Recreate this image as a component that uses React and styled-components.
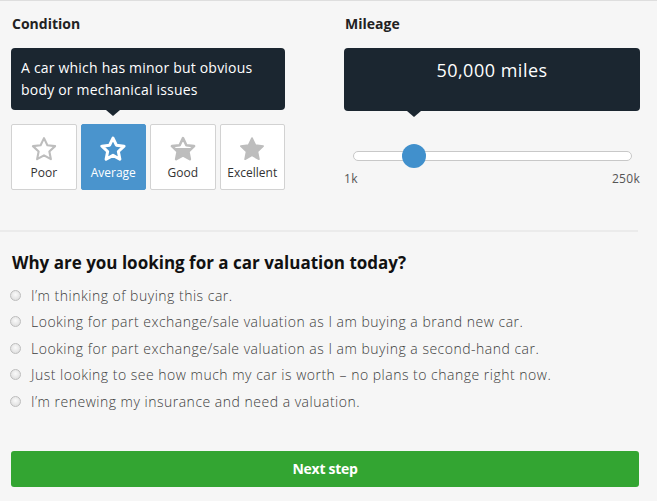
import React from 'react'
import styled, { createGlobalStyle } from 'styled-components'

const GlobalStyle = createGlobalStyle`
  html, body { margin: 0; padding: 0; background: #f6f6f6; }
  body { font-family: "Open Sans", "Noto Sans", Arial, sans-serif; color: #222; }
`

const Page = styled.div`
  width: 657px;
  height: 501px;
  box-sizing: border-box;
  border-top: 1px solid #dedede;
  background: #f6f6f6;
`

const Top = styled.div`
  display: grid;
  grid-template-columns: 274px 296px;
  column-gap: 59px;
  padding: 14px 0 0 11px;
`

const Label = styled.div`
  font-size: 14px;
  font-weight: 700;
  line-height: 18px;
  padding-left: 1px;
  margin-bottom: 15px;
`

const Tip = styled.div`
  position: relative;
  background: #1b2630;
  color: #fff;
  border-radius: 4px;
  box-sizing: border-box;
  height: ${p => p.$h}px;
  padding: ${p => p.$center ? '10px 0 0' : '9px 10px 0'};
  font-size: ${p => p.$center ? '18px' : '14px'};
  line-height: ${p => p.$center ? '24px' : '22px'};
  letter-spacing: ${p => p.$center ? '0.5px' : '0.2px'};
  text-align: ${p => p.$center ? 'center' : 'left'};
  &::after {
    content: '';
    position: absolute;
    left: ${p => p.$arrow}px;
    bottom: -6px;
    border-left: 7px solid transparent;
    border-right: 7px solid transparent;
    border-top: 6px solid #1b2630;
  }
`

const Options = styled.div`
  display: flex;
  gap: 4px;
  margin-top: 14px;
`

const Option = styled.div`
  width: 64px;
  height: 64px;
  border: 1px solid ${p => p.$active ? '#4a94cd' : '#d2d2d2'};
  border-radius: 2px;
  background: ${p => p.$active ? '#4a94cd' : '#fff'};
  color: ${p => p.$active ? '#fff' : '#333'};
  display: flex;
  flex-direction: column;
  align-items: center;
  font-size: 12px;
  line-height: 16px;
  svg { margin-top: 10px; margin-bottom: 4px; }
`

const Slider = styled.div`
  position: relative;
  margin: 40px 8px 0 9px;
  height: 10px;
  box-sizing: border-box;
  border: 1px solid #c8c8c8;
  border-radius: 6px;
  background: #fff;
`

const Thumb = styled.div`
  position: absolute;
  top: -8px;
  width: 24px;
  height: 24px;
  margin-left: -12px;
  border-radius: 50%;
  background: #4190cc;
`

const Scale = styled.div`
  display: flex;
  justify-content: space-between;
  margin-top: 10px;
  font-size: 12px;
  color: #555;
  line-height: 16px;
  letter-spacing: 0.3px;
`

const Divider = styled.div`
  width: 638px;
  height: 2px;
  background: #ebebeb;
  margin-top: 40px;
`

const Question = styled.h2`
  margin: 20px 0 8px 12px;
  font-size: 17px;
  font-weight: 700;
  line-height: 22px;
  color: #111;
`

const Choices = styled.div`
  display: flex;
  flex-direction: column;
  padding-left: 10px;
`

const Choice = styled.label`
  display: flex;
  align-items: center;
  height: 26.5px;
  font-size: 14px;
  font-weight: 300;
  color: #3d3d3d;
  letter-spacing: 0.5px;
`

const Radio = styled.span`
  width: 9px;
  height: 9px;
  border-radius: 50%;
  border: 1px solid #bdbdbd;
  background: radial-gradient(circle at 50% 40%, #fafafa, #d8d8d8);
  margin-right: 10px;
`

const Next = styled.button`
  display: block;
  margin: 36px 0 0 11px;
  width: 628px;
  height: 36px;
  border: none;
  border-radius: 3px;
  background: #33a532;
  color: #fff;
  font-family: "Open Sans", "Noto Sans", Arial, sans-serif;
  font-size: 14px;
  font-weight: 700;
  letter-spacing: -0.3px;
`

const STAR = 'M12 2.5l2.9 6.1 6.6.8-4.9 4.6 1.3 6.6L12 17.3l-5.9 3.3 1.3-6.6L2.5 9.4l6.6-.8z'

function Star({ kind }) {
  if (kind === 'full') {
    return (
      <svg width="28" height="26" viewBox="0 0 24 22">
        <path d={STAR} fill="#bdbdbd" stroke="#bdbdbd" strokeWidth="1.5" strokeLinejoin="round" />
      </svg>
    )
  }
  if (kind === 'half') {
    return (
      <svg width="28" height="26" viewBox="0 0 24 22">
        <defs>
          <linearGradient id="half" x1="0" y1="0" x2="0" y2="1">
            <stop offset="0.45" stopColor="#fff" />
            <stop offset="0.45" stopColor="#bdbdbd" />
          </linearGradient>
        </defs>
        <path d={STAR} fill="url(#half)" stroke="#bdbdbd" strokeWidth="2.2" strokeLinejoin="round" />
      </svg>
    )
  }
  const white = kind === 'white'
  return (
    <svg width="28" height="26" viewBox="0 0 24 22">
      <path d={STAR} fill="none" stroke={white ? '#fff' : '#bdbdbd'} strokeWidth={white ? 2.6 : 1.8} strokeLinejoin="round" />
    </svg>
  )
}

const conditions = [
  { name: 'Poor', star: 'outline' },
  { name: 'Average', star: 'white', active: true },
  { name: 'Good', star: 'half' },
  { name: 'Excellent', star: 'full' },
]

const reasons = [
  'I’m thinking of buying this car.',
  'Looking for part exchange/sale valuation as I am buying a brand new car.',
  'Looking for part exchange/sale valuation as I am buying a second-hand car.',
  'Just looking to see how much my car is worth – no plans to change right now.',
  'I’m renewing my insurance and need a valuation.',
]

export default function App() {
  const pct = (50000 - 1000) / (250000 - 1000)
  return (
    <Page>
      <GlobalStyle />
      <Top>
        <div>
          <Label>Condition</Label>
          <Tip $h={62} $arrow={95}>A car which has minor but obvious body or mechanical issues</Tip>
          <Options>
            {conditions.map(c => (
              <Option key={c.name} $active={c.active}>
                <Star kind={c.star} />
                {c.name}
              </Option>
            ))}
          </Options>
        </div>
        <div>
          <Label>Mileage</Label>
          <Tip $h={63} $arrow={63} $center>50,000 miles</Tip>
          <Slider>
            <Thumb style={{ left: `${pct * 100 + 2}%` }} />
          </Slider>
          <Scale>
            <span>1k</span>
            <span>250k</span>
          </Scale>
        </div>
      </Top>
      <Divider />
      <Question>Why are you looking for a car valuation today?</Question>
      <Choices>
        {reasons.map(r => (
          <Choice key={r}>
            <Radio />
            {r}
          </Choice>
        ))}
      </Choices>
      <Next>Next step</Next>
    </Page>
  )
}
